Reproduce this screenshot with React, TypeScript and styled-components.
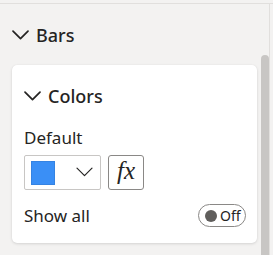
import React, { useState } from "react"
import styled, { createGlobalStyle } from "styled-components"

// ■■■■■■■■■■■■■■■■■■■■■■■■■■■■■■■■■■■■■■■■■■■■■■■■■■■■■■■■■■■■■■■■■■■■■■■■■■■■■

const GlobalStyle = createGlobalStyle`
	html, body {
		margin: 0;
		padding: 0;
		background: #f3f2f1;
		overflow: hidden;
	}
	body {
		font-family: "Noto Sans", "Open Sans", sans-serif;
		color: #252423;
	}
`

function Chevron({ size = 17, weight = 1.7 }: { size?: number; weight?: number }) {
	return (
		<svg width={size} height={size * 0.6} viewBox="0 0 17 10" fill="none">
			<path d="M1 1 L8.5 8.5 L16 1" stroke="#252423" strokeWidth={weight} strokeLinecap="round" strokeLinejoin="round" />
		</svg>
	)
}

export default function App() {
	const [showAll, setShowAll] = useState(false)

	return (
		<Frame>
			<GlobalStyle />
			<TopStrip />
			<Body>
				<Pane>
					<SectionHeader>
						<Chevron />
						<span>Bars</span>
					</SectionHeader>

					<Card>
						<CardHeader>
							<Chevron />
							<span>Colors</span>
						</CardHeader>

						<Label>Default</Label>
						<PickerRow>
							<ColorPicker>
								<Swatch $color="#3a8ff6" />
								<Chevron size={17} weight={1.2} />
							</ColorPicker>
							<FxButton>fx</FxButton>
						</PickerRow>

						<ToggleRow>
							<Label>Show all</Label>
							<Toggle onClick={() => setShowAll(!showAll)}>
								<Knob />
								<span>{showAll ? "On" : "Off"}</span>
							</Toggle>
						</ToggleRow>
					</Card>
				</Pane>
				<ScrollTrack>
					<Thumb />
				</ScrollTrack>
				<RightEdge />
			</Body>
		</Frame>
	)
}

// 〓〓〓〓〓〓〓〓〓〓〓〓〓〓〓〓〓〓〓〓〓〓〓〓〓〓〓〓〓〓	STYLED_COMPONENTS

const Frame = styled.div`
	width: 273px;
	height: 255px;
	display: flex;
	flex-direction: column;
	overflow: hidden;
`

const TopStrip = styled.div`
	height: 3px;
	flex: none;
	border-bottom: 1px solid #e1dfdd;
`

const Body = styled.div`
	flex: 1;
	display: flex;
	min-height: 0;
`

const Pane = styled.div`
	width: 261px;
	padding: 15px 4px 0 12px;
	box-sizing: border-box;
`

const SectionHeader = styled.div`
	height: 32px;
	display: flex;
	align-items: center;
	gap: 7px;
	font-size: 18px;
	font-weight: 500;

	svg {
		margin-top: 1px;
	}
`

const Card = styled.div`
	margin-top: 14px;
	background: #ffffff;
	border-radius: 5px;
	box-shadow: 0 1px 3px rgba(0, 0, 0, 0.12), 0 0 1px rgba(0, 0, 0, 0.08);
	padding: 15px 11px 16px 12px;
	height: 178px;
	box-sizing: border-box;
`

const CardHeader = styled(SectionHeader)`
	margin-bottom: 16px;
`

const Label = styled.div`
	font-size: 17px;
	line-height: 20px;
	color: #252423;
`

const PickerRow = styled.div`
	display: flex;
	gap: 7px;
	margin-top: 7px;
`

const ColorPicker = styled.div`
	width: 77px;
	height: 35px;
	box-sizing: border-box;
	border: 1px solid #c8c6c4;
	border-radius: 2px;
	display: flex;
	align-items: center;
	justify-content: space-between;
	padding: 0 7px 0 6px;
`

const Swatch = styled.div<{ $color: string }>`
	width: 24px;
	height: 24px;
	background: ${(p) => p.$color};
	box-shadow: inset 0 0 0 1px rgba(0, 0, 0, 0.08);
`

const FxButton = styled.div`
	width: 36px;
	height: 35px;
	box-sizing: border-box;
	border: 1px solid #8a8886;
	border-radius: 3px;
	display: flex;
	align-items: center;
	justify-content: center;
	font-family: "Liberation Serif", serif;
	font-style: italic;
	font-size: 25px;
	color: #252423;
	padding-bottom: 3px;
`

const ToggleRow = styled.div`
	margin-top: 14px;
	height: 23px;
	display: flex;
	align-items: center;
	justify-content: space-between;
`

const Toggle = styled.div`
	width: 48px;
	height: 23px;
	box-sizing: border-box;
	border: 1px solid #8a8886;
	border-radius: 12px;
	display: flex;
	align-items: center;
	gap: 3px;
	padding-left: 6px;
	font-size: 14px;
	color: #252423;
	cursor: pointer;
`

const Knob = styled.div`
	width: 12px;
	height: 12px;
	border-radius: 50%;
	background: #605e5c;
`

const ScrollTrack = styled.div`
	width: 8px;
	padding-top: 51px;
	box-sizing: border-box;
`

const Thumb = styled.div`
	height: 100%;
	background: #c8c6c4;
	border-radius: 4px 4px 0 0;
`

const RightEdge = styled.div`
	width: 3px;
	border-left: 1px solid #e1dfdd;
`
